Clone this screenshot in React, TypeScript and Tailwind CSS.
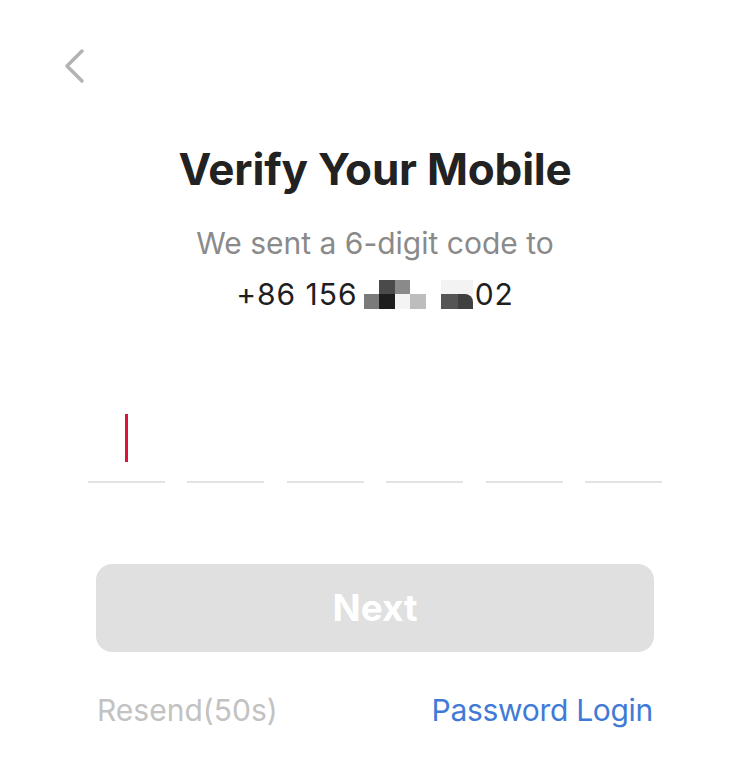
import React from 'react';

const Mosaic: React.FC = () => (
  <span className="inline-flex items-center align-middle mx-[6px] gap-[15px]">
    <span className="grid grid-cols-[15px_16px_15px_16px] grid-rows-[14px_15px]">
      <span className="bg-white" />
      <span className="bg-[#4a4a4a]" />
      <span className="bg-[#8a8a8a]" />
      <span className="bg-white" />
      <span className="bg-[#7a7a7a]" />
      <span className="bg-[#1e1e1e]" />
      <span className="bg-[#f4f4f4]" />
      <span className="bg-[#bdbdbd]" />
    </span>
    <span className="grid grid-cols-[17px_15px] grid-rows-[14px_15px]">
      <span className="bg-[#f3f3f3]" />
      <span className="bg-[#f3f3f3]" />
      <span className="bg-[#555555]" />
      <span className="bg-[#404040] rounded-tr-[8px]" />
    </span>
  </span>
);

const App: React.FC = () => {
  const slots = [0, 1, 2, 3, 4, 5];
  return (
    <div className="w-[750px] h-[780px] bg-white flex flex-col font-['Inter',sans-serif]">
      <div className="pl-[63px] pt-[48px] h-[86px]">
        <svg width="22" height="36" viewBox="0 0 22 36" fill="none">
          <path d="M19 3 L4 18 L19 33" stroke="#b3b3b3" strokeWidth="3.5" strokeLinecap="round" strokeLinejoin="round" />
        </svg>
      </div>

      <h1 className="mt-[55px] text-center text-[44px] leading-[56px] font-bold text-[#222222] tracking-[-0.2px]">
        Verify Your Mobile
      </h1>
      <p className="mt-[26px] text-center text-[30px] leading-[40px] text-[#8a8a8a]">
        We sent a 6-digit code to
      </p>
      <p className="mt-[11px] text-center text-[30px] leading-[40px] text-[#1f1f1f] tracking-[1px] flex items-center justify-center">
        <span>+86 156</span>
        <Mosaic />
        <span className="-ml-[4px]">02</span>
      </p>

      <div className="mt-[97px] px-[88px] flex justify-between">
        {slots.map((i) => (
          <div key={i} className="w-[77px] h-[72px] border-b-2 border-[#e3e3e3] flex justify-center pt-[3px]">
            {i === 0 && <div className="w-[3px] h-[48px] bg-[#dc143c]" />}
          </div>
        ))}
      </div>

      <div className="mt-[81px] mx-[96px] h-[88px] rounded-[16px] bg-[#e0e0e0] flex items-center justify-center">
        <span className="text-white text-[37px] font-bold">Next</span>
      </div>

      <div className="mt-[36px] mx-[97px] flex justify-between items-center">
        <span className="text-[30px] text-[#c2c2c2]">Resend(50s)</span>
        <span className="text-[30px] text-[#3f7bd6] tracking-[-0.3px]">Password Login</span>
      </div>
    </div>
  );
};

export default App;
